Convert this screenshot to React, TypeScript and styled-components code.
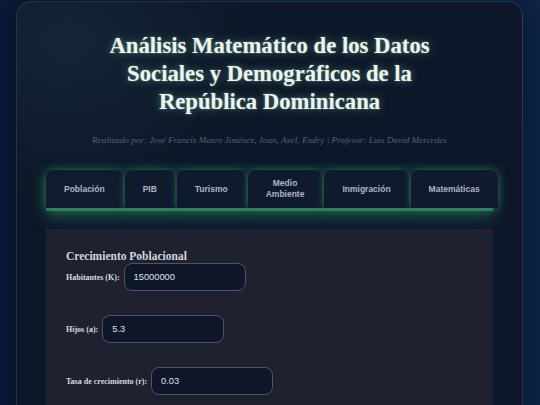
import { useState } from "react"
import styled, { createGlobalStyle } from "styled-components"

const GlobalStyle = createGlobalStyle`
  html, body {
    margin: 0;
    padding: 0;
  }
  body {
    min-height: 100vh;
    background: linear-gradient(90deg, #0a1a38 0%, #0c1f40 50%, #0e2546 100%);
    font-family: "Liberation Serif", "Times New Roman", serif;
    overflow: hidden;
  }
`

const Page = styled.div`
  padding: 1px 17px 0 16px;
`

const Card = styled.main`
  box-sizing: border-box;
  min-height: 440px;
  padding: 30px 29px 30px 29px;
  border: 1px solid rgba(110, 170, 170, 0.22);
  border-radius: 16px;
  background:
    radial-gradient(ellipse 260px 220px at 10% 8%, rgba(40, 90, 100, 0.22), transparent 70%),
    #0e1729;
  box-shadow: 0 0 30px rgba(0, 0, 0, 0.35);
`

const Title = styled.h1`
  max-width: 350px;
  margin: 0 auto;
  text-align: center;
  font-size: 22.7px;
  line-height: 28px;
  font-weight: 700;
  color: #eef4ef;
  text-shadow: 0 0 8px rgba(130, 230, 180, 0.45), 0 0 2px rgba(200, 255, 220, 0.4);
`

const Credits = styled.p`
  margin: 18px 0 0;
  text-align: center;
  font-size: 9.2px;
  line-height: 12px;
  font-style: italic;
  color: #566174;
`

const TabBar = styled.nav`
  display: flex;
  gap: 2px;
  margin-top: 24px;
  border-bottom: 3px solid #2e7a5a;
  box-shadow: 0 5px 16px rgba(40, 160, 100, 0.5);
`

const Tab = styled.button<{ $active?: boolean }>`
  flex: none;
  width: min-content;
  display: flex;
  align-items: center;
  justify-content: center;
  height: 38px;
  padding: 0 18px;
  border: none;
  border-radius: 8px 8px 0 0;
  background: ${p => (p.$active ? "#111b30" : "#101a2e")};
  box-shadow: 0 0 8px rgba(40, 160, 100, 0.55);
  font-family: "Liberation Sans", Arial, sans-serif;
  font-size: 8.5px;
  line-height: 11px;
  font-weight: 700;
  color: #aeb6c2;
  text-align: center;
  cursor: pointer;
`

const Panel = styled.section`
  margin-top: 18px;
  padding: 20px;
  min-height: 200px;
  background: #1e2130;
`

const PanelTitle = styled.h2`
  margin: 0;
  font-size: 11.5px;
  line-height: 14px;
  font-weight: 700;
  color: #d2d6de;
`

const Field = styled.div`
  display: flex;
  align-items: center;
  gap: 4px;
  margin-bottom: 24px;
`

const Label = styled.label`
  font-size: 8px;
  font-weight: 700;
  color: #d6dae2;
`

const Input = styled.input`
  box-sizing: border-box;
  width: 122px;
  height: 28px;
  padding: 0 9px;
  border: 1.5px solid #4c5569;
  border-radius: 8px;
  background: #0f1628;
  font-family: "Liberation Sans", Arial, sans-serif;
  font-size: 9.3px;
  color: #dde2ea;
  outline: none;
`

const tabs = ["Población", "PIB", "Turismo", "Medio Ambiente", "Inmigración", "Matemáticas"]

const fields = [
  { id: "k", label: "Habitantes (K):", value: "15000000" },
  { id: "a", label: "Hijos (a):", value: "5.3" },
  { id: "r", label: "Tasa de crecimiento (r):", value: "0.03" }
]

export default function App() {
  const [active, setActive] = useState("Población")
  const [values, setValues] = useState<Record<string, string>>(
    Object.fromEntries(fields.map(f => [f.id, f.value]))
  )

  return (
    <>
      <GlobalStyle />
      <Page>
        <Card>
          <Title>Análisis Matemático de los Datos Sociales y Demográficos de la República Dominicana</Title>
          <Credits>
            Realizado por: José Francis Mateo Jiménez, Joan, Axel, Endry | Profesor: Luis David Mercedes
          </Credits>
          <TabBar>
            {tabs.map(t => (
              <Tab key={t} $active={t === active} onClick={() => setActive(t)}>
                {t}
              </Tab>
            ))}
          </TabBar>
          <Panel>
            <PanelTitle>Crecimiento Poblacional</PanelTitle>
            {fields.map(f => (
              <Field key={f.id}>
                <Label htmlFor={f.id}>{f.label}</Label>
                <Input
                  id={f.id}
                  value={values[f.id]}
                  onChange={e => setValues({ ...values, [f.id]: e.target.value })}
                />
              </Field>
            ))}
          </Panel>
        </Card>
      </Page>
    </>
  )
}
